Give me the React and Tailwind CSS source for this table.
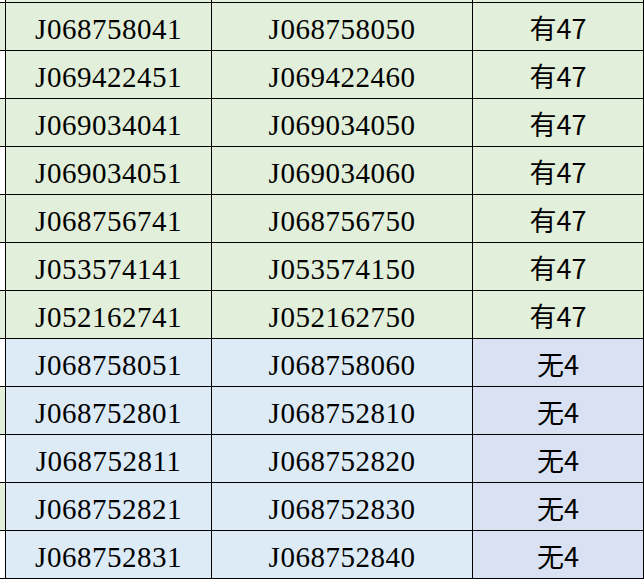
const rows = [
  ['J068758041', 'J068758050', '有47', 'green'],
  ['J069422451', 'J069422460', '有47', 'green'],
  ['J069034041', 'J069034050', '有47', 'green'],
  ['J069034051', 'J069034060', '有47', 'green'],
  ['J068756741', 'J068756750', '有47', 'green'],
  ['J053574141', 'J053574150', '有47', 'green'],
  ['J052162741', 'J052162750', '有47', 'green'],
  ['J068758051', 'J068758060', '无4', 'blue'],
  ['J068752801', 'J068752810', '无4', 'blue'],
  ['J068752811', 'J068752820', '无4', 'blue'],
  ['J068752821', 'J068752830', '无4', 'blue'],
  ['J068752831', 'J068752840', '无4', 'blue'],
];

const serif = "font-['Liberation_Serif',serif] text-[29px] tracking-[0.5px] text-black";
const sans = "font-['Noto_Sans_CJK_SC',sans-serif] text-[27px] font-normal text-black";

export default function App() {
  return (
    <div className="w-[644px] h-[579px] overflow-hidden bg-white">
      {/* sliver of the row above */}
      <div className="flex h-[3px] border-b border-black">
        <div className="w-[6px] bg-white border-r border-black" />
        <div className="w-[206px] bg-[#e2efda] border-r border-black" />
        <div className="w-[261px] bg-[#e2efda] border-r border-black" />
        <div className="w-[171px] bg-[#e2efda] border-r border-black" />
      </div>
      {rows.map(([a, b, c, tone], i) => {
        const bg = tone === 'green' ? 'bg-[#e2efda]' : 'bg-[#ddebf7]';
        const bg3 = tone === 'green' ? 'bg-[#e2efda]' : 'bg-[#d9e1f2]';
        return (
          <div key={a} className="flex h-[48px] border-b border-black">
            <div className={`w-[6px] border-r border-black ${i % 2 === 0 ? 'bg-[#e2efda]' : 'bg-white'}`} />
            <div className={`w-[206px] border-r border-black ${bg} flex items-center justify-center pt-[6px] ${serif}`}>
              {a}
            </div>
            <div className={`w-[261px] border-r border-black ${bg} flex items-center justify-center pt-[6px] ${serif}`}>
              {b}
            </div>
            <div className={`w-[171px] border-r border-black ${bg3} flex items-center justify-center pt-[4px] ${sans}`}>
              {c}
            </div>
          </div>
        );
      })}
    </div>
  );
}
